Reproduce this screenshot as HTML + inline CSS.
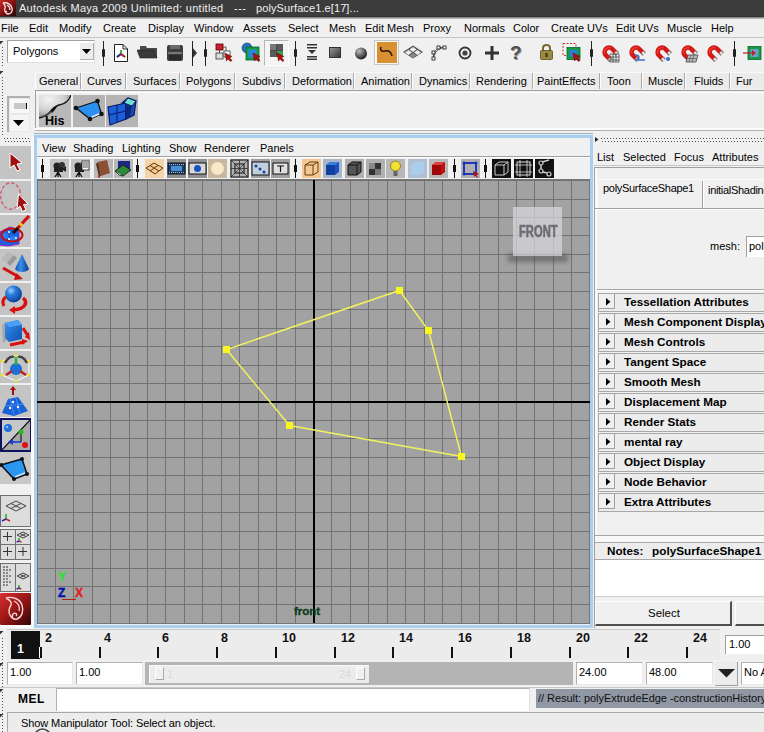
<!DOCTYPE html><html><head><meta charset="utf-8"><style>
html,body{margin:0;padding:0}
body{width:764px;height:732px;position:relative;overflow:hidden;background:#f0f0f0;font-family:"Liberation Sans",sans-serif;font-size:11px;color:#000}
.a{position:absolute}
.t{position:absolute;white-space:nowrap;line-height:13px}
svg{display:block}
</style></head><body><div class="a" style="left:0px;top:0px;width:764px;height:17px;background:#3c3c3c"></div>
<div class="a" style="left:0px;top:16px;width:764px;height:1px;background:#343434"></div>
<div class="a" style="left:0px;top:17px;width:764px;height:1px;background:#8a8a8a"></div>
<div class="a" style="left:0px;top:18px;width:764px;height:1px;background:#b8b8b8"></div>
<svg class="a" style="left:0;top:0" width="16" height="16"><defs><linearGradient id="gtl" x1="0" y1="0" x2="1" y2="1"><stop offset="0" stop-color="#d02828"/><stop offset="0.5" stop-color="#801010"/><stop offset="1" stop-color="#200808"/></linearGradient></defs><rect width="16" height="16" fill="url(#gtl)"/><path d="M3 3C7 2 11 4 12 8C13 11 11 14 8 14C6 14 5 12 7 11M3 3C5 5 6 6 5 8C4 10 5 13 8 14M7 5C9 6 10 8 10 10" fill="none" stroke="#f8e8e8" stroke-width="1.3"/></svg>
<div class="t" style="left:19px;top:2px;color:#f0f0f0;font-size:11px;letter-spacing:0.28px">Autodesk Maya 2009 Unlimited: untitled</div>
<div class="t" style="left:234px;top:2px;color:#f0f0f0;font-size:11px;letter-spacing:0.5px">---</div>
<div class="t" style="left:256px;top:2px;color:#f0f0f0;font-size:11px;letter-spacing:0.1px">polySurface1.e[17]...</div>
<div class="t" style="left:1px;top:22px;">File</div>
<div class="t" style="left:29px;top:22px;">Edit</div>
<div class="t" style="left:59px;top:22px;">Modify</div>
<div class="t" style="left:103px;top:22px;">Create</div>
<div class="t" style="left:148px;top:22px;">Display</div>
<div class="t" style="left:194px;top:22px;">Window</div>
<div class="t" style="left:243px;top:22px;">Assets</div>
<div class="t" style="left:288px;top:22px;">Select</div>
<div class="t" style="left:329px;top:22px;">Mesh</div>
<div class="t" style="left:365px;top:22px;">Edit Mesh</div>
<div class="t" style="left:423px;top:22px;">Proxy</div>
<div class="t" style="left:464px;top:22px;">Normals</div>
<div class="t" style="left:513px;top:22px;">Color</div>
<div class="t" style="left:551px;top:22px;">Create UVs</div>
<div class="t" style="left:616px;top:22px;">Edit UVs</div>
<div class="t" style="left:667px;top:22px;">Muscle</div>
<div class="t" style="left:711px;top:22px;">Help</div>
<div class="a" style="left:0px;top:37px;width:764px;height:1px;background:#c4c4c4"></div>
<div class="a" style="left:2px;top:47px;width:1px;height:21px;background:repeating-linear-gradient(#555 0 1px,transparent 1px 3px)"></div>
<div class="a" style="left:2px;top:77px;width:1px;height:58px;background:repeating-linear-gradient(#555 0 1px,transparent 1px 3px)"></div>
<svg class="a" style="left:0;top:41px" width="4" height="4"><path d="M0 0H3.5L0 3.5Z" fill="#333"/></svg>
<svg class="a" style="left:0;top:71px" width="4" height="4"><path d="M0 0H3.5L0 3.5Z" fill="#333"/></svg>
<div class="a" style="left:7px;top:40px;width:88px;height:23px;background:#fff;border-top:1px solid #a0a0a0;border-left:1px solid #a0a0a0;box-sizing:border-box;border-right:1px solid #e0e0e0;border-bottom:1px solid #e0e0e0"></div>
<div class="a" style="left:80px;top:43px;width:14px;height:17px;background:#ececec;border-right:1px solid #b0b0b0;border-bottom:1px solid #b0b0b0;box-sizing:border-box"></div>
<svg class="a" style="left:82px;top:49px" width="10" height="6"><path d="M0 0H9L4.5 5Z" fill="#000"/></svg>
<div class="t" style="left:13px;top:45px;">Polygons</div>
<div class="a" style="left:103px;top:41px;width:1px;height:25px;background:#222"></div>
<div class="a" style="left:102px;top:49px;width:3px;height:8px;background:#222;border-radius:1px"></div>
<div class="a" style="left:205px;top:41px;width:1px;height:25px;background:#222"></div>
<div class="a" style="left:204px;top:49px;width:3px;height:8px;background:#222;border-radius:1px"></div>
<div class="a" style="left:295px;top:41px;width:1px;height:25px;background:#222"></div>
<div class="a" style="left:294px;top:49px;width:3px;height:8px;background:#222;border-radius:1px"></div>
<div class="a" style="left:591px;top:41px;width:1px;height:25px;background:#222"></div>
<div class="a" style="left:590px;top:49px;width:3px;height:8px;background:#222;border-radius:1px"></div>
<div class="a" style="left:734px;top:41px;width:1px;height:25px;background:#222"></div>
<div class="a" style="left:733px;top:49px;width:3px;height:8px;background:#222;border-radius:1px"></div>
<svg class="a" style="left:192px;top:47px" width="6" height="12"><path d="M0 0L5 6L0 12Z" fill="#333"/></svg>
<div class="a" style="left:192px;top:41px;width:1px;height:25px;background:#222"></div>
<svg class="a" style="left:114px;top:44px;" width="14" height="18" viewBox="0 0 14 18"><path d="M0.5 0.5H9L13.5 5V17.5H0.5Z" fill="#fff" stroke="#222"/><path d="M9 0.5V5H13.5" fill="none" stroke="#222"/><path d="M7 6V10L3 13M7 10L11 13" stroke="#2a8a2a" stroke-width="1.6" fill="none"/><path d="M7 10L3 13" stroke="#1a2aa0" stroke-width="1.8"/><path d="M7 10L11 13" stroke="#c02020" stroke-width="1.8"/></svg>
<svg class="a" style="left:137px;top:46px;" width="21" height="13" viewBox="0 0 21 13"><path d="M3 0H9L10 2H20V12H3Z" fill="#4a4a4a"/><path d="M0 4H17L20 12H3Z" fill="#3a3a3a" stroke="#222" stroke-width="0.6"/></svg>
<svg class="a" style="left:167px;top:45px;" width="16" height="16" viewBox="0 0 16 16"><rect x="0" y="0" width="16" height="16" rx="2" fill="#3c3c3c"/><rect x="3" y="0" width="10" height="4" fill="#6a6a6a"/><rect x="1" y="7" width="14" height="2" fill="#777"/><rect x="2" y="10" width="12" height="5" fill="#2a2a2a"/></svg>
<svg class="a" style="left:215px;top:43px;" width="19" height="20" viewBox="0 0 19 20"><rect x="1" y="1" width="7" height="6" fill="#d02030" stroke="#500" stroke-width="0.8"/><rect x="1" y="10" width="7" height="6" fill="#ddd" stroke="#333" stroke-width="0.8"/><rect x="9" y="8" width="6" height="6" fill="#fff" stroke="#333" stroke-width="0.8"/><path d="M4.5 7V10M8 4H11V8" stroke="#333" fill="none" stroke-width="0.8"/><path d="M10 10L17 13.5L14.5 14.5L17 17.5L15.5 18.5L13 16L11.5 18Z" fill="#b01010" stroke="#600" stroke-width="0.5"/></svg>
<svg class="a" style="left:241px;top:42px;" width="20" height="21" viewBox="0 0 20 21"><circle cx="6" cy="6" r="5" fill="#2a70c8" stroke="#135" stroke-width="0.6"/><rect x="5" y="5" width="13" height="13" fill="#1a9a40" stroke="#063" stroke-width="0.8"/><rect x="7.5" y="7.5" width="8" height="8" fill="#2a88e0"/><path d="M12 11L19 14.5L16.5 15.5L19 18.5L17.5 19.5L15 17L13.5 19Z" fill="#b01010" stroke="#600" stroke-width="0.5"/></svg>
<div class="a" style="left:264px;top:40px;width:25px;height:26px;border:1px solid #b8b8b8;border-right-color:#fff;border-bottom-color:#fff;box-sizing:border-box;background:#f4f4f4"></div>
<svg class="a" style="left:269px;top:43px;" width="18" height="20" viewBox="0 0 18 20"><rect x="1" y="1" width="13" height="13" fill="#5a5a5a"/><rect x="1" y="1" width="6" height="6" fill="#7a7a7a"/><rect x="8" y="8" width="6" height="6" fill="#3aa050"/><path d="M7.5 1V14M1 7.5H14" stroke="#444" stroke-width="0.8"/><path d="M8 10L15 13.5L12.5 14.5L15 17.5L13.5 18.5L11 16L9.5 18Z" fill="#b01010" stroke="#600" stroke-width="0.5"/></svg>
<svg class="a" style="left:307px;top:44px;" width="10" height="16" viewBox="0 0 10 16"><rect x="0" y="0" width="10" height="1.5" fill="#333"/><rect x="0" y="3" width="10" height="1.5" fill="#333"/><path d="M1 6H9L5 10Z" fill="#333"/><rect x="0" y="12" width="10" height="1.5" fill="#333"/><rect x="0" y="14.5" width="10" height="1.5" fill="#333"/></svg>
<svg class="a" style="left:329px;top:47px;" width="12" height="11" viewBox="0 0 12 11"><defs><linearGradient id="gsq" x1="0" y1="0" x2="1" y2="1"><stop offset="0" stop-color="#999"/><stop offset="1" stop-color="#333"/></linearGradient></defs><rect x="0.5" y="0.5" width="11" height="10" fill="url(#gsq)" stroke="#333"/></svg>
<svg class="a" style="left:354px;top:47px;" width="14" height="13" viewBox="0 0 14 13"><defs><radialGradient id="gsp" cx="0.35" cy="0.3" r="0.7"><stop offset="0" stop-color="#bbb"/><stop offset="1" stop-color="#222"/></radialGradient></defs><circle cx="7" cy="6.5" r="6" fill="url(#gsp)"/></svg>
<div class="a" style="left:374px;top:40px;width:25px;height:25px;border:1px solid #c8c8c8;box-sizing:border-box;background:#fafafa"></div>
<div class="a" style="left:377px;top:42px;width:20px;height:21px;background:#d89030"></div>
<svg class="a" style="left:377px;top:42px;" width="20" height="21" viewBox="0 0 20 21"><path d="M4 5C3 8 4 10 8 9C12 8 14 10 15 14" stroke="#2a1a0a" stroke-width="1.6" fill="none"/></svg>
<svg class="a" style="left:402px;top:45px;" width="22" height="15" viewBox="0 0 22 15"><path d="M11 0.5L21 7L11 13.5L1 7Z" fill="#555"/><path d="M11 2L14.5 4.5L11 7L7.5 4.5Z M15.5 5L19 7.5L15.5 10L12 7.5Z M6.5 5L10 7.5L6.5 10L3 7.5Z" fill="#eee"/><path d="M11 8L14.5 10.5L11 13L7.5 10.5Z" fill="#888"/></svg>
<svg class="a" style="left:431px;top:45px;" width="16" height="16" viewBox="0 0 16 16"><path d="M2.5 13.5V7.5L7.5 2.5H13.5" stroke="#333" fill="none" stroke-width="0.8"/><path d="M2.5 13.5C3 7 8 3 13.5 2.5" stroke="#333" fill="none" stroke-width="0.8"/><rect x="1" y="12" width="3" height="3" fill="#fff" stroke="#111" stroke-width="0.8"/><rect x="1" y="6" width="3" height="3" fill="#fff" stroke="#111" stroke-width="0.8"/><rect x="6" y="1" width="3" height="3" fill="#fff" stroke="#111" stroke-width="0.8"/><rect x="12" y="1" width="3" height="3" fill="#fff" stroke="#111" stroke-width="0.8"/></svg>
<svg class="a" style="left:458px;top:46px;" width="14" height="14" viewBox="0 0 14 14"><circle cx="7" cy="7" r="5.5" fill="none" stroke="#333" stroke-width="1.8"/><circle cx="7" cy="7" r="2.6" fill="#444"/></svg>
<svg class="a" style="left:485px;top:46px;" width="14" height="14" viewBox="0 0 14 14"><rect x="5.5" y="0" width="3" height="14" fill="#333"/><rect x="0" y="5.5" width="14" height="3" fill="#333"/></svg>
<div class="t" style="left:510px;top:46px;font-size:19px;font-weight:bold;color:#505050;text-shadow:1px 1px 0 #999">?</div>
<svg class="a" style="left:540px;top:43px;" width="13" height="17" viewBox="0 0 13 17"><path d="M3 8V5C3 1 10 1 10 5V8" stroke="#7a6a30" stroke-width="2" fill="none"/><rect x="0.5" y="7.5" width="12" height="9" rx="1" fill="#9a8a40" stroke="#5a4a20" stroke-width="0.8"/><rect x="5.5" y="10" width="2" height="4" fill="#3a2a10"/></svg>
<svg class="a" style="left:562px;top:43px;" width="20" height="21" viewBox="0 0 20 21"><rect x="1" y="0.5" width="13" height="12" fill="none" stroke="#d03030" stroke-dasharray="2 1.5"/><rect x="5" y="4.5" width="13" height="12" fill="#1a9a40" stroke="#063" stroke-width="0.8"/><rect x="7.5" y="7" width="8" height="7" fill="#2a80d0"/><path d="M11 10L18 13.5L15.5 14.5L18 17.5L16.5 18.5L14 16L12.5 18Z" fill="#b01010" stroke="#600" stroke-width="0.5"/></svg>
<svg class="a" style="left:600px;top:43px;" width="21" height="20" viewBox="0 0 21 20"><path d="M17.1 10.8L12.18 5.82A4.5 4.5 0 0 0 5.82 12.18L10.8 17.1" fill="none" stroke="#d41818" stroke-width="4.6"/><path d="M10.5 4.8A4.5 4.5 0 0 0 4.8 10.5" fill="none" stroke="#f05030" stroke-width="1.5" opacity="0.7"/><path d="M17.3 11L15.3 9M11 17.3L9 15.3" stroke="#8a8a8a" stroke-width="4.6"/><path d="M17.3 11L15.3 9M11 17.3L9 15.3" stroke="#e8e8e8" stroke-width="2"/><path d="M10 11H19V19H10Z M13 11V19 M16 11V19 M10 14H19 M10 17H19" stroke="#444" fill="none" stroke-width="0.8"/></svg>
<svg class="a" style="left:627px;top:43px;" width="21" height="20" viewBox="0 0 21 20"><path d="M17.1 10.8L12.18 5.82A4.5 4.5 0 0 0 5.82 12.18L10.8 17.1" fill="none" stroke="#d41818" stroke-width="4.6"/><path d="M10.5 4.8A4.5 4.5 0 0 0 4.8 10.5" fill="none" stroke="#f05030" stroke-width="1.5" opacity="0.7"/><path d="M17.3 11L15.3 9M11 17.3L9 15.3" stroke="#8a8a8a" stroke-width="4.6"/><path d="M17.3 11L15.3 9M11 17.3L9 15.3" stroke="#e8e8e8" stroke-width="2"/><path d="M8 12C13 12 13 15 9 17H18" stroke="#3a70c0" stroke-width="1.6" fill="none"/></svg>
<svg class="a" style="left:653px;top:43px;" width="21" height="20" viewBox="0 0 21 20"><path d="M17.1 10.8L12.18 5.82A4.5 4.5 0 0 0 5.82 12.18L10.8 17.1" fill="none" stroke="#d41818" stroke-width="4.6"/><path d="M10.5 4.8A4.5 4.5 0 0 0 4.8 10.5" fill="none" stroke="#f05030" stroke-width="1.5" opacity="0.7"/><path d="M17.3 11L15.3 9M11 17.3L9 15.3" stroke="#8a8a8a" stroke-width="4.6"/><path d="M17.3 11L15.3 9M11 17.3L9 15.3" stroke="#e8e8e8" stroke-width="2"/><circle cx="15" cy="16" r="2" fill="#2a70d0"/></svg>
<svg class="a" style="left:679px;top:43px;" width="21" height="20" viewBox="0 0 21 20"><path d="M17.1 10.8L12.18 5.82A4.5 4.5 0 0 0 5.82 12.18L10.8 17.1" fill="none" stroke="#d41818" stroke-width="4.6"/><path d="M10.5 4.8A4.5 4.5 0 0 0 4.8 10.5" fill="none" stroke="#f05030" stroke-width="1.5" opacity="0.7"/><path d="M17.3 11L15.3 9M11 17.3L9 15.3" stroke="#8a8a8a" stroke-width="4.6"/><path d="M17.3 11L15.3 9M11 17.3L9 15.3" stroke="#e8e8e8" stroke-width="2"/><path d="M9 12L19 12L17 19L7 19Z" fill="#bbb" stroke="#444" stroke-width="0.8"/><path d="M12 12L10 19M15 12L13 19M8 15.5H18" stroke="#444" stroke-width="0.6"/></svg>
<svg class="a" style="left:705px;top:43px;" width="21" height="20" viewBox="0 0 21 20"><path d="M17.1 10.8L12.18 5.82A4.5 4.5 0 0 0 5.82 12.18L10.8 17.1" fill="none" stroke="#d41818" stroke-width="4.6"/><path d="M10.5 4.8A4.5 4.5 0 0 0 4.8 10.5" fill="none" stroke="#f05030" stroke-width="1.5" opacity="0.7"/><path d="M17.3 11L15.3 9M11 17.3L9 15.3" stroke="#8a8a8a" stroke-width="4.6"/><path d="M17.3 11L15.3 9M11 17.3L9 15.3" stroke="#e8e8e8" stroke-width="2"/></svg>
<svg class="a" style="left:743px;top:46px;" width="19" height="15" viewBox="0 0 19 15"><rect x="5" y="0.5" width="13" height="13" fill="#1a9a40" stroke="#063" stroke-width="0.8"/><rect x="7.5" y="3" width="8" height="8" fill="#6aa0d0"/><path d="M0 7H10" stroke="#c02020" stroke-width="1.2"/><path d="M9 4L13 7L9 10Z" fill="#c02020"/></svg>
<div class="a" style="left:35px;top:72px;width:729px;height:17px;background:#ebebeb;border-top:1px solid #f8f8f8;box-sizing:border-box"></div>
<div class="a" style="left:80px;top:73px;width:1px;height:16px;background:#a8a8a8"></div>
<div class="a" style="left:81px;top:73px;width:1px;height:16px;background:#fff"></div>
<div class="a" style="left:125px;top:73px;width:1px;height:16px;background:#a8a8a8"></div>
<div class="a" style="left:126px;top:73px;width:1px;height:16px;background:#fff"></div>
<div class="a" style="left:179px;top:73px;width:1px;height:16px;background:#a8a8a8"></div>
<div class="a" style="left:180px;top:73px;width:1px;height:16px;background:#fff"></div>
<div class="a" style="left:234px;top:73px;width:1px;height:16px;background:#a8a8a8"></div>
<div class="a" style="left:235px;top:73px;width:1px;height:16px;background:#fff"></div>
<div class="a" style="left:284px;top:73px;width:1px;height:16px;background:#a8a8a8"></div>
<div class="a" style="left:285px;top:73px;width:1px;height:16px;background:#fff"></div>
<div class="a" style="left:353px;top:73px;width:1px;height:16px;background:#a8a8a8"></div>
<div class="a" style="left:354px;top:73px;width:1px;height:16px;background:#fff"></div>
<div class="a" style="left:411px;top:73px;width:1px;height:16px;background:#a8a8a8"></div>
<div class="a" style="left:412px;top:73px;width:1px;height:16px;background:#fff"></div>
<div class="a" style="left:469px;top:73px;width:1px;height:16px;background:#a8a8a8"></div>
<div class="a" style="left:470px;top:73px;width:1px;height:16px;background:#fff"></div>
<div class="a" style="left:532px;top:73px;width:1px;height:16px;background:#a8a8a8"></div>
<div class="a" style="left:533px;top:73px;width:1px;height:16px;background:#fff"></div>
<div class="a" style="left:599px;top:73px;width:1px;height:16px;background:#a8a8a8"></div>
<div class="a" style="left:600px;top:73px;width:1px;height:16px;background:#fff"></div>
<div class="a" style="left:641px;top:73px;width:1px;height:16px;background:#a8a8a8"></div>
<div class="a" style="left:642px;top:73px;width:1px;height:16px;background:#fff"></div>
<div class="a" style="left:684px;top:73px;width:1px;height:16px;background:#a8a8a8"></div>
<div class="a" style="left:685px;top:73px;width:1px;height:16px;background:#fff"></div>
<div class="a" style="left:729px;top:73px;width:1px;height:16px;background:#a8a8a8"></div>
<div class="a" style="left:730px;top:73px;width:1px;height:16px;background:#fff"></div>
<div class="a" style="left:35px;top:72px;width:1px;height:17px;background:#fff"></div>
<div class="t" style="left:39px;top:75px;">General</div>
<div class="t" style="left:87px;top:75px;">Curves</div>
<div class="t" style="left:133px;top:75px;">Surfaces</div>
<div class="t" style="left:186px;top:75px;">Polygons</div>
<div class="t" style="left:242px;top:75px;">Subdivs</div>
<div class="t" style="left:292px;top:75px;">Deformation</div>
<div class="t" style="left:361px;top:75px;">Animation</div>
<div class="t" style="left:419px;top:75px;">Dynamics</div>
<div class="t" style="left:476px;top:75px;">Rendering</div>
<div class="t" style="left:537px;top:75px;">PaintEffects</div>
<div class="t" style="left:607px;top:75px;">Toon</div>
<div class="t" style="left:648px;top:75px;">Muscle</div>
<div class="t" style="left:694px;top:75px;">Fluids</div>
<div class="t" style="left:736px;top:75px;">Fur</div>
<div class="a" style="left:35px;top:90px;width:729px;height:1px;background:#a0a0a0"></div>
<div class="a" style="left:35px;top:91px;width:729px;height:40px;background:#f0f0f0;border-left:1px solid #a0a0a0;box-sizing:border-box"></div>
<div class="a" style="left:36px;top:92px;width:728px;height:1px;background:#fff"></div>
<div class="a" style="left:38px;top:94px;width:726px;height:34px;background:#f0f0f0"></div>
<svg class="a" style="left:39px;top:95px;" width="32" height="32" viewBox="0 0 32 32"><defs><radialGradient id="ghis" cx="0.3" cy="0.2" r="0.8"><stop offset="0" stop-color="#f4f4f4"/><stop offset="0.6" stop-color="#d0d0d0"/><stop offset="1" stop-color="#909090"/></radialGradient></defs><rect width="32" height="32" fill="#b8b8b8"/><path d="M0 0H32C30 6 26 9 20 10C16 11 14 13 11 17C8 21 4 22 0 23Z" fill="url(#ghis)"/><path d="M0 23C4 22 8 21 11 17C14 13 16 11 20 10C26 9 30 6 32 0" stroke="#111" stroke-width="1.3" fill="none"/><path d="M12 16C14 13 16 11 19 10.5C17 13 16 15 13 18Z" fill="#111"/><path d="M3 22C8 20 10 18 13 17" stroke="#555" stroke-width="2" fill="none" opacity="0.6"/></svg>
<div class="t" style="left:45px;top:115px;font-weight:bold;font-size:12.5px;color:#000">His</div>
<svg class="a" style="left:73px;top:95px;" width="32" height="32" viewBox="0 0 32 32"><rect width="32" height="32" fill="#b4b4b4"/><path d="M3 13L24.5 6L28.5 19L17 24Z" fill="#2a90f0" stroke="#111" stroke-width="1.3"/><path d="M18 22.5L27 18.5" stroke="#e0f0ff" stroke-width="1.5"/><circle cx="3" cy="13" r="2.3" fill="#111"/><circle cx="24.5" cy="6" r="2.3" fill="#111"/><circle cx="28.5" cy="19" r="2.3" fill="#111"/><circle cx="17" cy="24" r="2.3" fill="#111"/></svg>
<svg class="a" style="left:106px;top:95px;" width="32" height="32" viewBox="0 0 32 32"><rect width="32" height="32" fill="#b4b4b4"/><path d="M2 12L20 8L20 24L4 30Z" fill="#1a60d8" stroke="#0a1a6a" stroke-width="1.2"/><path d="M11 10V27M3 20L20 16" stroke="#0a1a6a" stroke-width="1"/><path d="M16 8L22 3L30 6L28 20L20 24L20 8Z" fill="#1a4ab0" stroke="#0a1a6a" stroke-width="1.2"/><path d="M22 3L30 6L26 11L18 8Z" fill="#70e0d0" stroke="#0a1a6a" stroke-width="1"/><path d="M20 10L26 11L24 22L20 24Z" fill="#0a2a80"/></svg>
<div class="a" style="left:7px;top:96px;width:23px;height:36px;background:#e8e8e8;border-left:2px solid #b0b0b0;border-top:2px solid #b0b0b0;box-sizing:border-box"></div>
<div class="a" style="left:10px;top:99px;width:19px;height:14px;background:#f8f8f8"></div>
<div class="a" style="left:14px;top:103px;width:12px;height:6px;background:#c8c8c8"></div>
<div class="a" style="left:26px;top:103px;width:1px;height:6px;background:#000"></div>
<div class="a" style="left:10px;top:115px;width:19px;height:16px;background:#f4f4f4"></div>
<svg class="a" style="left:13px;top:120px;" width="12" height="7" viewBox="0 0 12 7"><path d="M0 0H11L5.5 6Z" fill="#000"/></svg>
<div class="a" style="left:0px;top:137px;width:34px;height:491px;background:#f0f0f0"></div>
<div class="a" style="left:4px;top:138px;width:28px;height:1px;background:repeating-linear-gradient(90deg,#444 0 1px,transparent 1px 3px)"></div>
<div class="a" style="left:5px;top:141px;width:28px;height:1px;background:repeating-linear-gradient(90deg,#444 0 1px,transparent 1px 3px)"></div>
<div class="a" style="left:0px;top:146px;width:31px;height:33px;background:#c4c4c4"></div>
<div class="a" style="left:0px;top:181px;width:31px;height:32px;background:#c4c4c4"></div>
<div class="a" style="left:0px;top:215px;width:31px;height:32px;background:#c4c4c4"></div>
<div class="a" style="left:0px;top:249px;width:31px;height:32px;background:#c4c4c4"></div>
<div class="a" style="left:0px;top:283px;width:31px;height:32px;background:#c4c4c4"></div>
<div class="a" style="left:0px;top:317px;width:31px;height:32px;background:#c4c4c4"></div>
<div class="a" style="left:0px;top:351px;width:31px;height:32px;background:#c4c4c4"></div>
<div class="a" style="left:0px;top:385px;width:31px;height:32px;background:#c4c4c4"></div>
<svg class="a" style="left:0px;top:146px;" width="31" height="32" viewBox="0 0 31 32"><path d="M10 7L22 17L17 18L20 24L17 25L14 19L10 22Z" fill="#a01010" stroke="#fff" stroke-width="1"/></svg>
<svg class="a" style="left:0px;top:181px;" width="31" height="32" viewBox="0 0 31 32"><ellipse cx="10.7" cy="15" rx="10" ry="13.2" fill="none" stroke="#d06070" stroke-width="1.4" stroke-dasharray="3.5 2"/><path d="M18.5 13L28 23L23.5 23.5L26 29L22.5 30.5L20 25L17 28Z" fill="#a01010" stroke="#fff" stroke-width="1"/></svg>
<svg class="a" style="left:0px;top:215px;" width="31" height="32" viewBox="0 0 31 32"><path d="M0 17L10 12L19 15L19 29L8 31L0 30Z" fill="#1a60e0" stroke="#9020c0" stroke-width="1"/><circle cx="5" cy="21" r="3" fill="#2a80f0"/><circle cx="13" cy="24" r="3" fill="#2a80f0"/><ellipse cx="12" cy="20" rx="10.5" ry="6.5" fill="none" stroke="#c01010" stroke-width="2"/><path d="M16 15L29 1" stroke="#d01010" stroke-width="3.2"/><path d="M20 10.5L22 8.5" stroke="#f0d020" stroke-width="3.4"/><path d="M13 18L18 13" stroke="#111" stroke-width="3"/><circle cx="9" cy="17" r="1" fill="#fff"/><circle cx="16" cy="23" r="1" fill="#fff"/><circle cx="9" cy="24" r="1" fill="#fff"/></svg>
<svg class="a" style="left:0px;top:249px;" width="31" height="32" viewBox="0 0 31 32"><defs><linearGradient id="gcn" x1="0" y1="0" x2="1" y2="0"><stop offset="0" stop-color="#0a50b0"/><stop offset="0.4" stop-color="#3a90e8"/><stop offset="1" stop-color="#0a3a90"/></linearGradient></defs><path d="M1 10L8 3L14 6L7 14Z" fill="#b8b8b8"/><path d="M7 14L14 6L17 9L10 17Z" fill="#989898"/><path d="M22 5L29 20C27 24 17 24 15 20Z" fill="url(#gcn)"/><path d="M3 19L19 28" stroke="#d01010" stroke-width="3"/><path d="M16 24L23 30L14 31Z" fill="#d01010"/></svg>
<svg class="a" style="left:0px;top:283px;" width="31" height="32" viewBox="0 0 31 32"><defs><radialGradient id="gsb" cx="0.35" cy="0.3" r="0.75"><stop offset="0" stop-color="#a0d0ff"/><stop offset="0.35" stop-color="#2a80e0"/><stop offset="1" stop-color="#0a3a90"/></radialGradient></defs><circle cx="13.5" cy="11" r="8.5" fill="url(#gsb)"/><path d="M4 23C2 19 3 16 6 14" stroke="#d81010" stroke-width="3" fill="none"/><path d="M23 15C28 19 26 26 13 27" stroke="#d81010" stroke-width="3.5" fill="none"/><path d="M15 23L9 27L15 31Z" fill="#d81010"/></svg>
<svg class="a" style="left:0px;top:317px;" width="31" height="32" viewBox="0 0 31 32"><defs><linearGradient id="gcb" x1="0" y1="0" x2="1" y2="1"><stop offset="0" stop-color="#3a90f0"/><stop offset="1" stop-color="#0a50b0"/></linearGradient></defs><path d="M2 8L6 5L6 24L3 26Z" fill="#a8a8a8"/><path d="M5 6L18 3L22 8L22 22L9 25L5 21Z" fill="url(#gcb)"/><path d="M5 6L18 3L22 8L9 10Z" fill="#4aa0f8"/><path d="M23 11L28 19" stroke="#d81010" stroke-width="3"/><path d="M25 20L29 15L30 23Z" fill="#d81010"/><path d="M10 28L24 25" stroke="#d81010" stroke-width="3"/><path d="M22 22L28 24L22 28Z" fill="#d81010"/></svg>
<svg class="a" style="left:0px;top:351px;" width="31" height="32" viewBox="0 0 31 32"><path d="M2 10L16 4L29 10V24L16 30L2 24Z" fill="none" stroke="#fff" stroke-width="1"/><circle cx="16" cy="18" r="6" fill="#1a70d8"/><path d="M16 6V14" stroke="#2ab040" stroke-width="2.5"/><path d="M5 12C8 6 12 5 14 6M27 12C24 6 20 5 18 6" stroke="#444" stroke-width="2.5" fill="none"/><path d="M6 24L12 20M26 24L20 20" stroke="#c02020" stroke-width="2.5"/><circle cx="2" cy="10" r="1.5" fill="#f0e020"/><circle cx="29" cy="10" r="1.5" fill="#f0e020"/><circle cx="2" cy="24" r="1.5" fill="#f0e020"/><circle cx="29" cy="24" r="1.5" fill="#f0e020"/><circle cx="16" cy="30" r="1.5" fill="#f0e020"/><circle cx="16" cy="4" r="1.5" fill="#f0e020"/></svg>
<svg class="a" style="left:0px;top:385px;" width="31" height="32" viewBox="0 0 31 32"><path d="M13 3V10" stroke="#a01010" stroke-width="2"/><path d="M10 5L13 1L16 5Z" fill="#a01010"/><path d="M2 28L8 14L18 12L28 26L14 31Z" fill="#1a60d8"/><path d="M5 21L24 19M10 14L14 30M16 13L20 28" stroke="#4a9af0" stroke-width="0.8"/><circle cx="13" cy="17" r="1.2" fill="#fff"/><circle cx="10" cy="23" r="1.2" fill="#fff"/><circle cx="18" cy="22" r="1.2" fill="#fff"/></svg>
<div class="a" style="left:0px;top:418px;width:32px;height:34px;background:#b8b8b8;border:2px solid #101060;box-sizing:border-box"></div>
<svg class="a" style="left:2px;top:420px;" width="28" height="30" viewBox="0 0 28 30"><path d="M0 0H28V0L0 30Z" fill="#c8c8c8"/><path d="M28 0L0 30H28Z" fill="#a8a8a8"/><path d="M28 0L0 30" stroke="#111" stroke-width="1.2"/><circle cx="6" cy="8" r="4" fill="#1a70d8"/><circle cx="5" cy="7" r="1.3" fill="#8ac0f0"/><path d="M19 22V12" stroke="#1a1a1a" stroke-width="1.2"/><circle cx="19" cy="12" r="2.5" fill="#20c020"/><path d="M19 22H9" stroke="#1a3ad0" stroke-width="1.6"/><path d="M11 19L6 22L11 25Z" fill="#1a3ad0"/><circle cx="23" cy="25" r="3" fill="#e01010"/></svg>
<div class="a" style="left:0px;top:452px;width:31px;height:32px;background:#c8c8c8"></div>
<svg class="a" style="left:0px;top:452px;" width="31" height="32" viewBox="0 0 31 32"><path d="M1 13L22 7L27 22L14 27Z" fill="#2a98f0" stroke="#111" stroke-width="1.5"/><path d="M15 25L25 21" stroke="#d0e8ff" stroke-width="1.5"/><circle cx="1.5" cy="13" r="2" fill="#111"/><circle cx="22" cy="7" r="2" fill="#111"/><circle cx="27" cy="22" r="2" fill="#111"/><circle cx="14" cy="27" r="2" fill="#111"/></svg>
<div class="a" style="left:0px;top:495px;width:31px;height:32px;background:#dcdcdc;border:1px solid #707070;box-sizing:border-box"></div>
<svg class="a" style="left:0px;top:495px;" width="31" height="32" viewBox="0 0 31 32"><path d="M16 6L26 11L16 16L6 11Z M11 8.5L21 13.5 M21 8.5L11 13.5" fill="none" stroke="#444" stroke-width="1"/><path d="M6 24V19" stroke="#20b020" stroke-width="1.5"/><path d="M6 24L2 26" stroke="#2020d0" stroke-width="1.5"/><path d="M6 24L10 26" stroke="#d02020" stroke-width="1.5"/></svg>
<div class="a" style="left:0px;top:529px;width:31px;height:31px;background:#dcdcdc;border:1px solid #707070;box-sizing:border-box"></div>
<div class="a" style="left:15px;top:529px;width:1px;height:31px;background:#707070"></div>
<div class="a" style="left:0px;top:544px;width:31px;height:1px;background:#707070"></div>
<svg class="a" style="left:0px;top:529px;" width="31" height="31" viewBox="0 0 31 31"><path d="M7.5 3V12M3 7.5H12M7.5 18V27M3 22.5H12M23 18V27M18 22.5H27" stroke="#333" stroke-width="1"/><path d="M23 3L29 6L23 9L17 6Z M20 4.5L26 7.5 M26 4.5L20 7.5" fill="none" stroke="#444" stroke-width="1"/><path d="M19 12V9.0" stroke="#20b020" stroke-width="1.5"/><path d="M19 12L16.6 13.2" stroke="#2020d0" stroke-width="1.5"/><path d="M19 12L21.4 13.2" stroke="#d02020" stroke-width="1.5"/></svg>
<div class="a" style="left:0px;top:563px;width:31px;height:29px;background:#dcdcdc;border:1px solid #707070;box-sizing:border-box"></div>
<div class="a" style="left:15px;top:563px;width:1px;height:29px;background:#707070"></div>
<svg class="a" style="left:0px;top:563px;" width="31" height="29" viewBox="0 0 31 29"><path d="M3 4H9M3 7H11M3 10H9M3 13H11M3 16H9M3 19H11M3 22H9" stroke="#333" stroke-width="1" stroke-dasharray="2 1"/><path d="M23 10L29 13L23 16L17 13Z M20 11.5L26 14.5 M26 11.5L20 14.5" fill="none" stroke="#444" stroke-width="1"/><path d="M19 25V22.0" stroke="#20b020" stroke-width="1.5"/><path d="M19 25L16.6 26.2" stroke="#2020d0" stroke-width="1.5"/><path d="M19 25L21.4 26.2" stroke="#d02020" stroke-width="1.5"/></svg>
<svg class="a" style="left:0px;top:593px;" width="31" height="32" viewBox="0 0 31 32"><defs><linearGradient id="gml" x1="0" y1="0" x2="1" y2="1"><stop offset="0" stop-color="#d83030"/><stop offset="0.45" stop-color="#a01818"/><stop offset="1" stop-color="#300404"/></linearGradient></defs><rect width="31" height="32" rx="1" fill="url(#gml)"/><path d="M6 5C12 3 20 6 22 12C24 18 22 24 17 26C13 27 11 24 13 21C15 19 18 21 16 23M6 5C10 7 12 9 11 12C9 15 8 18 10 22C11 25 14 27 17 26" fill="none" stroke="#f4d8d8" stroke-width="1.4"/><path d="M14 8C18 10 20 14 19 18" fill="none" stroke="#f4d8d8" stroke-width="1.2"/></svg>
<div class="a" style="left:0px;top:625px;width:31px;height:3px;background:#fafafa"></div>
<div class="a" style="left:31px;top:137px;width:3px;height:491px;background:#fafafa"></div>
<div class="a" style="left:35px;top:128px;width:729px;height:2px;background:#fcfcfc"></div>
<div class="a" style="left:35px;top:130px;width:729px;height:1px;background:#b0b0b0"></div>
<div class="a" style="left:34px;top:133px;width:560px;height:1px;background:#a8b0b8"></div>
<div class="a" style="left:34px;top:134px;width:560px;height:494px;background:#aacfee"></div>
<div class="a" style="left:34px;top:134px;width:560px;height:1px;background:#d4ecfc"></div>
<div class="a" style="left:37px;top:138px;width:553px;height:487px;background:#f0f0f0"></div>
<div class="t" style="left:42px;top:142px;">View</div>
<div class="t" style="left:73px;top:142px;">Shading</div>
<div class="t" style="left:122px;top:142px;">Lighting</div>
<div class="t" style="left:169px;top:142px;">Show</div>
<div class="t" style="left:204px;top:142px;">Renderer</div>
<div class="t" style="left:260px;top:142px;">Panels</div>
<div class="a" style="left:37px;top:156px;width:553px;height:1px;background:#a0a0a0"></div>
<div class="a" style="left:37px;top:157px;width:553px;height:1px;background:#fff"></div>
<div class="a" style="left:42px;top:159px;width:1px;height:19px;background:#111"></div>
<div class="a" style="left:41px;top:165px;width:3px;height:7px;background:#111"></div>
<div class="a" style="left:137px;top:159px;width:1px;height:19px;background:#111"></div>
<div class="a" style="left:136px;top:165px;width:3px;height:7px;background:#111"></div>
<div class="a" style="left:295px;top:159px;width:1px;height:19px;background:#111"></div>
<div class="a" style="left:294px;top:165px;width:3px;height:7px;background:#111"></div>
<div class="a" style="left:454px;top:159px;width:1px;height:19px;background:#111"></div>
<div class="a" style="left:453px;top:165px;width:3px;height:7px;background:#111"></div>
<div class="a" style="left:485px;top:159px;width:1px;height:19px;background:#111"></div>
<div class="a" style="left:484px;top:165px;width:3px;height:7px;background:#111"></div>
<svg class="a" style="left:50px;top:159px;" width="19" height="19" viewBox="0 0 19 19"><rect width="19" height="19" fill="#c4c4c4"/><circle cx="7" cy="7" r="3.5" fill="#222"/><circle cx="12" cy="6" r="3" fill="#333"/><rect x="4" y="8" width="9" height="5" fill="#222"/><path d="M13 9L16 7V13L13 11Z" fill="#222"/><path d="M8 13L5 18M8 13V18M8 13L11 18" stroke="#111" stroke-width="1.3"/></svg>
<svg class="a" style="left:71px;top:159px;" width="19" height="19" viewBox="0 0 19 19"><rect width="19" height="19" fill="#c4c4c4"/><circle cx="7" cy="7" r="3.5" fill="#222"/><circle cx="12" cy="6" r="3" fill="#333"/><rect x="4" y="8" width="9" height="5" fill="#222"/><path d="M8 13L5 18M8 13V18M8 13L11 18" stroke="#111" stroke-width="1.3"/><rect x="11" y="2" width="7" height="9" fill="#fff" stroke="#222" stroke-width="0.8"/><path d="M12 4H17M12 6H17M12 8H17" stroke="#222" stroke-width="0.8"/></svg>
<svg class="a" style="left:94px;top:159px;" width="19" height="19" viewBox="0 0 19 19"><rect width="19" height="19" fill="#b8b8b8"/><path d="M4 3L13 1L16 14L7 17Z" fill="#8a5030"/><path d="M4 3L7 17L5 18L2 5Z" fill="#5a3020"/><path d="M5 16V19" stroke="#d02020" stroke-width="1.5"/></svg>
<svg class="a" style="left:114px;top:159px;" width="19" height="19" viewBox="0 0 19 19"><rect width="19" height="19" fill="#b8b8b8"/><rect x="4" y="2" width="12" height="9" fill="#1a2a80"/><path d="M1 12L9 6L17 11L9 17Z" fill="#2a8a3a" stroke="#111" stroke-width="0.8"/><path d="M1 12L5 16L9 17" fill="#fff" stroke="#111" stroke-width="0.8"/></svg>
<svg class="a" style="left:145px;top:159px;" width="19" height="19" viewBox="0 0 19 19"><rect width="19" height="19" fill="#f4d4a8"/><path d="M1 9L9 4L18 9L10 15Z" fill="#f4c890" stroke="#6a3a10" stroke-width="1"/><path d="M5 6.5L14 12M13 6.5L5 12" stroke="#6a3a10" stroke-width="1"/></svg>
<svg class="a" style="left:167px;top:159px;" width="19" height="19" viewBox="0 0 19 19"><rect width="19" height="19" fill="#909090"/><rect x="1" y="4" width="17" height="11" fill="#1a3a6a" stroke="#111"/><rect x="4" y="7" width="11" height="5" fill="#4a90d0"/><path d="M2 5.5H17M2 13.5H17" stroke="#ddd" stroke-width="0.8" stroke-dasharray="1 1"/></svg>
<svg class="a" style="left:188px;top:159px;" width="19" height="19" viewBox="0 0 19 19"><rect width="19" height="19" fill="#909090"/><rect x="1" y="4" width="17" height="11" fill="#d8d8d8" stroke="#111"/><circle cx="9.5" cy="9.5" r="3.5" fill="#1a50c0"/></svg>
<svg class="a" style="left:208px;top:159px;" width="19" height="19" viewBox="0 0 19 19"><rect width="19" height="19" fill="#c8b8a0"/><circle cx="9.5" cy="9.5" r="6.5" fill="#f8e8c8"/></svg>
<svg class="a" style="left:230px;top:159px;" width="19" height="19" viewBox="0 0 19 19"><rect width="19" height="19" fill="#b0b0b0"/><rect x="1" y="1" width="17" height="17" fill="none" stroke="#111"/><rect x="5" y="5" width="9" height="9" fill="none" stroke="#111"/><path d="M1 1L18 18M18 1L1 18M9.5 1V18M1 9.5H18" stroke="#222" stroke-width="0.7"/></svg>
<svg class="a" style="left:251px;top:159px;" width="19" height="19" viewBox="0 0 19 19"><rect width="19" height="19" fill="#a0a0a0"/><rect x="1" y="3" width="17" height="13" fill="#c0d0e0" stroke="#111"/><circle cx="5" cy="7" r="1.5" fill="#1a40a0"/><circle cx="9" cy="10" r="1.5" fill="#1a40a0"/><circle cx="13" cy="13" r="1.5" fill="#1a40a0"/></svg>
<svg class="a" style="left:271px;top:159px;" width="19" height="19" viewBox="0 0 19 19"><rect width="19" height="19" fill="#a0a0a0"/><rect x="2" y="4" width="15" height="11" fill="#e0e0e0" stroke="#111"/><path d="M6 7H13M9.5 7V13" stroke="#111" stroke-width="1.2"/></svg>
<svg class="a" style="left:302px;top:159px;" width="19" height="19" viewBox="0 0 19 19"><rect width="19" height="19" fill="#f4c890"/><path d="M3 6L8 3H16V13L11 16H3Z" fill="none" stroke="#6a3a10" stroke-width="1"/><path d="M3 6H11V16M11 6L16 3" stroke="#6a3a10" stroke-width="1" fill="none"/></svg>
<svg class="a" style="left:323px;top:159px;" width="19" height="19" viewBox="0 0 19 19"><rect width="19" height="19" fill="#a8b8c8"/><path d="M3 6L7 3H16V13L12 16H3Z" fill="#1a50c0"/><path d="M3 6H12V16H3Z" fill="#1040a0"/><path d="M3 6L7 3H16L12 6Z" fill="#3a80e0"/></svg>
<svg class="a" style="left:345px;top:159px;" width="19" height="19" viewBox="0 0 19 19"><rect width="19" height="19" fill="#b0b0b0"/><path d="M3 6L7 3H16V13L12 16H3Z" fill="#555" stroke="#111"/><path d="M3 6H12V16M12 6L16 3" stroke="#111" fill="none"/></svg>
<svg class="a" style="left:366px;top:159px;" width="19" height="19" viewBox="0 0 19 19"><rect width="19" height="19" fill="#b0b0b0"/><rect x="3" y="4" width="12" height="12" fill="#333"/><rect x="3" y="4" width="6" height="6" fill="#888"/><rect x="9" y="10" width="6" height="6" fill="#777"/></svg>
<svg class="a" style="left:386px;top:159px;" width="19" height="19" viewBox="0 0 19 19"><rect width="19" height="19" fill="#b8b8b8"/><circle cx="9.5" cy="7" r="5" fill="#f0e030" stroke="#8a7010" stroke-width="0.8"/><rect x="7.5" y="12" width="4" height="5" fill="#666"/></svg>
<svg class="a" style="left:408px;top:159px;" width="19" height="19" viewBox="0 0 19 19"><rect width="19" height="19" fill="#b0c0d0"/><path d="M3 6L7 3H16V13L12 16H3Z" fill="#a8d0f0" opacity="0.8"/></svg>
<svg class="a" style="left:429px;top:159px;" width="19" height="19" viewBox="0 0 19 19"><rect width="19" height="19" fill="#b8b8b8"/><path d="M3 6L7 3H16V13L12 16H3Z" fill="#c01010"/><path d="M3 6H12V16H3Z" fill="#a00808"/><path d="M3 6L7 3H16L12 6Z" fill="#e04040"/></svg>
<svg class="a" style="left:461px;top:159px;" width="19" height="19" viewBox="0 0 19 19"><rect width="19" height="19" fill="#b0b0b0"/><rect x="3" y="4" width="12" height="11" fill="none" stroke="#1a30c0" stroke-width="1.8"/><path d="M1 4H17M1 15H17M3 2V17M15 2V17" stroke="#1a30c0" stroke-width="0.8"/><path d="M12 12L18 15L15.5 16L17 18.5L16 19L14.5 16.5L13 18Z" fill="#b01010"/></svg>
<svg class="a" style="left:492px;top:159px;" width="19" height="19" viewBox="0 0 19 19"><rect width="19" height="19" fill="#111"/><path d="M3 6L7 3H16V13L12 16H3Z M3 6H12V16M12 6L16 3" fill="none" stroke="#ccc" stroke-width="1"/></svg>
<svg class="a" style="left:514px;top:159px;" width="19" height="19" viewBox="0 0 19 19"><rect width="19" height="19" fill="#111"/><rect x="3" y="3" width="13" height="13" fill="none" stroke="#ddd"/><path d="M1 6H18M1 13H18M6 1V18M13 1V18" stroke="#ddd" stroke-width="0.8"/></svg>
<svg class="a" style="left:535px;top:159px;" width="19" height="19" viewBox="0 0 19 19"><rect width="19" height="19" fill="#111"/><circle cx="6" cy="4" r="2" fill="none" stroke="#ccc" stroke-width="1.2"/><circle cx="6" cy="12" r="2" fill="none" stroke="#ccc" stroke-width="1.2"/><circle cx="14" cy="15" r="2" fill="none" stroke="#ccc" stroke-width="1.2"/><path d="M6 6V10M8 13L12 14M7 3L14 1" stroke="#ccc" stroke-width="1.5"/></svg>
<svg class="a" style="left:37px;top:179px" width="553" height="445"><rect width="553" height="445" fill="#a2a2a2"/><rect x="18" y="0" width="1" height="445" fill="#727272"/><rect x="36" y="0" width="1" height="445" fill="#727272"/><rect x="55" y="0" width="1" height="445" fill="#727272"/><rect x="73" y="0" width="1" height="445" fill="#727272"/><rect x="92" y="0" width="1" height="445" fill="#727272"/><rect x="110" y="0" width="1" height="445" fill="#727272"/><rect x="128" y="0" width="1" height="445" fill="#727272"/><rect x="147" y="0" width="1" height="445" fill="#727272"/><rect x="165" y="0" width="1" height="445" fill="#727272"/><rect x="184" y="0" width="1" height="445" fill="#727272"/><rect x="202" y="0" width="1" height="445" fill="#727272"/><rect x="221" y="0" width="1" height="445" fill="#727272"/><rect x="239" y="0" width="1" height="445" fill="#727272"/><rect x="258" y="0" width="1" height="445" fill="#727272"/><rect x="294" y="0" width="1" height="445" fill="#727272"/><rect x="313" y="0" width="1" height="445" fill="#727272"/><rect x="331" y="0" width="1" height="445" fill="#727272"/><rect x="350" y="0" width="1" height="445" fill="#727272"/><rect x="368" y="0" width="1" height="445" fill="#727272"/><rect x="387" y="0" width="1" height="445" fill="#727272"/><rect x="405" y="0" width="1" height="445" fill="#727272"/><rect x="424" y="0" width="1" height="445" fill="#727272"/><rect x="442" y="0" width="1" height="445" fill="#727272"/><rect x="461" y="0" width="1" height="445" fill="#727272"/><rect x="479" y="0" width="1" height="445" fill="#727272"/><rect x="497" y="0" width="1" height="445" fill="#727272"/><rect x="516" y="0" width="1" height="445" fill="#727272"/><rect x="534" y="0" width="1" height="445" fill="#727272"/><rect x="0" y="1" width="553" height="1" fill="#727272"/><rect x="0" y="20" width="553" height="1" fill="#727272"/><rect x="0" y="38" width="553" height="1" fill="#727272"/><rect x="0" y="56" width="553" height="1" fill="#727272"/><rect x="0" y="75" width="553" height="1" fill="#727272"/><rect x="0" y="93" width="553" height="1" fill="#727272"/><rect x="0" y="112" width="553" height="1" fill="#727272"/><rect x="0" y="130" width="553" height="1" fill="#727272"/><rect x="0" y="149" width="553" height="1" fill="#727272"/><rect x="0" y="167" width="553" height="1" fill="#727272"/><rect x="0" y="186" width="553" height="1" fill="#727272"/><rect x="0" y="204" width="553" height="1" fill="#727272"/><rect x="0" y="241" width="553" height="1" fill="#727272"/><rect x="0" y="259" width="553" height="1" fill="#727272"/><rect x="0" y="278" width="553" height="1" fill="#727272"/><rect x="0" y="296" width="553" height="1" fill="#727272"/><rect x="0" y="315" width="553" height="1" fill="#727272"/><rect x="0" y="333" width="553" height="1" fill="#727272"/><rect x="0" y="352" width="553" height="1" fill="#727272"/><rect x="0" y="370" width="553" height="1" fill="#727272"/><rect x="0" y="389" width="553" height="1" fill="#727272"/><rect x="0" y="407" width="553" height="1" fill="#727272"/><rect x="0" y="425" width="553" height="1" fill="#727272"/><rect x="0" y="444" width="553" height="1" fill="#727272"/><rect x="276" y="0" width="2" height="445" fill="#000"/><rect x="0.5" y="0.5" width="552" height="444" fill="none" stroke="#767676"/><rect x="0" y="222" width="553" height="2" fill="#000"/><defs><linearGradient id="gsh" x1="0" y1="0" x2="0" y2="1"><stop offset="0" stop-color="#555" stop-opacity="0.8"/><stop offset="1" stop-color="#888" stop-opacity="0"/></linearGradient></defs><filter id="blr" x="-50%" y="-50%" width="200%" height="200%"><feGaussianBlur stdDeviation="2.5"/></filter><rect x="471" y="75" width="60" height="8" fill="#505050" opacity="0.6" filter="url(#blr)"/><rect x="476" y="28" width="49" height="49" fill="#d8d8dc" opacity="0.72"/>
<polygon points="362.5,111.5 391.5,151.5 424.5,277.5 252.5,246.5 189.5,170.5" fill="none" stroke="#f0f060" stroke-width="1.5"/>
<rect x="359" y="108" width="7" height="7" fill="#f8f820"/>
<rect x="388" y="148" width="7" height="7" fill="#f8f820"/>
<rect x="421" y="274" width="7" height="7" fill="#f8f820"/>
<rect x="249" y="243" width="7" height="7" fill="#f8f820"/>
<rect x="186" y="167" width="7" height="7" fill="#f8f820"/>
</svg>
<div class="t" style="left:519px;top:225px;font-weight:bold;font-size:16px;color:#6c6c74;transform:scaleX(0.7);transform-origin:0 0;-webkit-text-stroke:0.6px #6c6c74">FRONT</div>
<div class="t" style="left:58px;top:571px;font-weight:bold;font-size:12px;color:#30e030;-webkit-text-stroke:0.4px #30e030">Y</div>
<div class="t" style="left:58px;top:587px;font-weight:bold;font-size:12px;color:#0010b0;-webkit-text-stroke:0.4px #0010b0">Z</div>
<div class="t" style="left:75px;top:587px;font-weight:bold;font-size:12px;color:#e02020;-webkit-text-stroke:0.4px #e02020">X</div>
<div class="a" style="left:62px;top:599px;width:14px;height:1px;background:#b02020"></div>
<div class="t" style="left:294px;top:605px;font-weight:bold;font-size:11.5px;color:#0a3a1a;-webkit-text-stroke:0.3px #0a3a1a">front</div>
<div class="a" style="left:593px;top:131px;width:171px;height:497px;background:#f0f0f0"></div>
<svg class="a" style="left:595px;top:137px;" width="4" height="6" viewBox="0 0 4 6"><path d="M0 0L3.5 2.5L0 5Z" fill="#223"/></svg>
<div class="a" style="left:601px;top:138px;width:163px;height:1px;background:repeating-linear-gradient(90deg,#444 0 1px,transparent 1px 3px)"></div>
<div class="a" style="left:602px;top:141px;width:162px;height:1px;background:repeating-linear-gradient(90deg,#444 0 1px,transparent 1px 3px)"></div>
<div class="t" style="left:597px;top:151px;">List</div>
<div class="t" style="left:623px;top:151px;">Selected</div>
<div class="t" style="left:674px;top:151px;">Focus</div>
<div class="t" style="left:712px;top:151px;">Attributes</div>
<div class="a" style="left:594px;top:165px;width:170px;height:1px;background:#c8c8c8"></div>
<div class="a" style="left:594px;top:167px;width:170px;height:1px;background:#a0a0a0"></div>
<div class="a" style="left:594px;top:167px;width:1px;height:461px;background:#a0a0a0"></div>
<div class="a" style="left:595px;top:168px;width:169px;height:460px;background:#f0f0f0"></div>
<div class="a" style="left:595px;top:168px;width:2px;height:367px;background:#fafafa"></div>
<div class="a" style="left:597px;top:179px;width:167px;height:1px;background:#fafafa"></div>
<div class="a" style="left:597px;top:179px;width:1px;height:29px;background:#fafafa"></div>
<div class="t" style="left:603px;top:182px;letter-spacing:-0.3px">polySurfaceShape1</div>
<div class="a" style="left:702px;top:181px;width:1px;height:27px;background:#a0a0a0"></div>
<div class="a" style="left:703px;top:181px;width:1px;height:27px;background:#fff"></div>
<div class="t" style="left:708px;top:184px;letter-spacing:-0.3px">initialShadingGroup</div>
<div class="a" style="left:595px;top:208px;width:169px;height:1px;background:#a0a0a0"></div>
<div class="a" style="left:595px;top:209px;width:169px;height:1px;background:#fff"></div>
<div class="t" style="left:710px;top:240px;">mesh:</div>
<div class="a" style="left:746px;top:236px;width:18px;height:21px;background:#fff;border-left:1px solid #a0a0a0;border-top:1px solid #a0a0a0;box-sizing:border-box"></div>
<div class="t" style="left:749px;top:240px;">polySurfaceShape1</div>
<div class="a" style="left:597px;top:289px;width:167px;height:1px;background:#a8a8a8"></div>
<div class="a" style="left:597px;top:290px;width:167px;height:1px;background:#fff"></div>
<div class="a" style="left:598px;top:293px;width:166px;height:18px;background:#ececec;border-top:1px solid #a8a8a8;border-left:1px solid #a8a8a8;box-sizing:border-box"></div>
<div class="a" style="left:598px;top:311px;width:166px;height:1px;background:#a8a8a8"></div>
<div class="a" style="left:599px;top:294px;width:16px;height:15px;background:#f0f0f0;border-right:1px solid #a0a0a0;border-bottom:1px solid #a0a0a0;box-sizing:border-box"></div>
<svg class="a" style="left:606px;top:298px;" width="5" height="8" viewBox="0 0 5 8"><path d="M0 0L4.5 3.75L0 7.5Z" fill="#000"/></svg>
<div class="t" style="left:624px;top:295px;font-weight:bold;font-size:11.7px">Tessellation Attributes</div>
<div class="a" style="left:598px;top:313px;width:166px;height:18px;background:#ececec;border-top:1px solid #a8a8a8;border-left:1px solid #a8a8a8;box-sizing:border-box"></div>
<div class="a" style="left:598px;top:331px;width:166px;height:1px;background:#a8a8a8"></div>
<div class="a" style="left:599px;top:314px;width:16px;height:15px;background:#f0f0f0;border-right:1px solid #a0a0a0;border-bottom:1px solid #a0a0a0;box-sizing:border-box"></div>
<svg class="a" style="left:606px;top:318px;" width="5" height="8" viewBox="0 0 5 8"><path d="M0 0L4.5 3.75L0 7.5Z" fill="#000"/></svg>
<div class="t" style="left:624px;top:315px;font-weight:bold;font-size:11.7px">Mesh Component Display</div>
<div class="a" style="left:598px;top:333px;width:166px;height:18px;background:#ececec;border-top:1px solid #a8a8a8;border-left:1px solid #a8a8a8;box-sizing:border-box"></div>
<div class="a" style="left:598px;top:351px;width:166px;height:1px;background:#a8a8a8"></div>
<div class="a" style="left:599px;top:334px;width:16px;height:15px;background:#f0f0f0;border-right:1px solid #a0a0a0;border-bottom:1px solid #a0a0a0;box-sizing:border-box"></div>
<svg class="a" style="left:606px;top:338px;" width="5" height="8" viewBox="0 0 5 8"><path d="M0 0L4.5 3.75L0 7.5Z" fill="#000"/></svg>
<div class="t" style="left:624px;top:335px;font-weight:bold;font-size:11.7px">Mesh Controls</div>
<div class="a" style="left:598px;top:353px;width:166px;height:18px;background:#ececec;border-top:1px solid #a8a8a8;border-left:1px solid #a8a8a8;box-sizing:border-box"></div>
<div class="a" style="left:598px;top:371px;width:166px;height:1px;background:#a8a8a8"></div>
<div class="a" style="left:599px;top:354px;width:16px;height:15px;background:#f0f0f0;border-right:1px solid #a0a0a0;border-bottom:1px solid #a0a0a0;box-sizing:border-box"></div>
<svg class="a" style="left:606px;top:358px;" width="5" height="8" viewBox="0 0 5 8"><path d="M0 0L4.5 3.75L0 7.5Z" fill="#000"/></svg>
<div class="t" style="left:624px;top:355px;font-weight:bold;font-size:11.7px">Tangent Space</div>
<div class="a" style="left:598px;top:373px;width:166px;height:18px;background:#ececec;border-top:1px solid #a8a8a8;border-left:1px solid #a8a8a8;box-sizing:border-box"></div>
<div class="a" style="left:598px;top:391px;width:166px;height:1px;background:#a8a8a8"></div>
<div class="a" style="left:599px;top:374px;width:16px;height:15px;background:#f0f0f0;border-right:1px solid #a0a0a0;border-bottom:1px solid #a0a0a0;box-sizing:border-box"></div>
<svg class="a" style="left:606px;top:378px;" width="5" height="8" viewBox="0 0 5 8"><path d="M0 0L4.5 3.75L0 7.5Z" fill="#000"/></svg>
<div class="t" style="left:624px;top:375px;font-weight:bold;font-size:11.7px">Smooth Mesh</div>
<div class="a" style="left:598px;top:393px;width:166px;height:18px;background:#ececec;border-top:1px solid #a8a8a8;border-left:1px solid #a8a8a8;box-sizing:border-box"></div>
<div class="a" style="left:598px;top:411px;width:166px;height:1px;background:#a8a8a8"></div>
<div class="a" style="left:599px;top:394px;width:16px;height:15px;background:#f0f0f0;border-right:1px solid #a0a0a0;border-bottom:1px solid #a0a0a0;box-sizing:border-box"></div>
<svg class="a" style="left:606px;top:398px;" width="5" height="8" viewBox="0 0 5 8"><path d="M0 0L4.5 3.75L0 7.5Z" fill="#000"/></svg>
<div class="t" style="left:624px;top:395px;font-weight:bold;font-size:11.7px">Displacement Map</div>
<div class="a" style="left:598px;top:413px;width:166px;height:18px;background:#ececec;border-top:1px solid #a8a8a8;border-left:1px solid #a8a8a8;box-sizing:border-box"></div>
<div class="a" style="left:598px;top:431px;width:166px;height:1px;background:#a8a8a8"></div>
<div class="a" style="left:599px;top:414px;width:16px;height:15px;background:#f0f0f0;border-right:1px solid #a0a0a0;border-bottom:1px solid #a0a0a0;box-sizing:border-box"></div>
<svg class="a" style="left:606px;top:418px;" width="5" height="8" viewBox="0 0 5 8"><path d="M0 0L4.5 3.75L0 7.5Z" fill="#000"/></svg>
<div class="t" style="left:624px;top:415px;font-weight:bold;font-size:11.7px">Render Stats</div>
<div class="a" style="left:598px;top:433px;width:166px;height:18px;background:#ececec;border-top:1px solid #a8a8a8;border-left:1px solid #a8a8a8;box-sizing:border-box"></div>
<div class="a" style="left:598px;top:451px;width:166px;height:1px;background:#a8a8a8"></div>
<div class="a" style="left:599px;top:434px;width:16px;height:15px;background:#f0f0f0;border-right:1px solid #a0a0a0;border-bottom:1px solid #a0a0a0;box-sizing:border-box"></div>
<svg class="a" style="left:606px;top:438px;" width="5" height="8" viewBox="0 0 5 8"><path d="M0 0L4.5 3.75L0 7.5Z" fill="#000"/></svg>
<div class="t" style="left:624px;top:435px;font-weight:bold;font-size:11.7px">mental ray</div>
<div class="a" style="left:598px;top:453px;width:166px;height:18px;background:#ececec;border-top:1px solid #a8a8a8;border-left:1px solid #a8a8a8;box-sizing:border-box"></div>
<div class="a" style="left:598px;top:471px;width:166px;height:1px;background:#a8a8a8"></div>
<div class="a" style="left:599px;top:454px;width:16px;height:15px;background:#f0f0f0;border-right:1px solid #a0a0a0;border-bottom:1px solid #a0a0a0;box-sizing:border-box"></div>
<svg class="a" style="left:606px;top:458px;" width="5" height="8" viewBox="0 0 5 8"><path d="M0 0L4.5 3.75L0 7.5Z" fill="#000"/></svg>
<div class="t" style="left:624px;top:455px;font-weight:bold;font-size:11.7px">Object Display</div>
<div class="a" style="left:598px;top:473px;width:166px;height:18px;background:#ececec;border-top:1px solid #a8a8a8;border-left:1px solid #a8a8a8;box-sizing:border-box"></div>
<div class="a" style="left:598px;top:491px;width:166px;height:1px;background:#a8a8a8"></div>
<div class="a" style="left:599px;top:474px;width:16px;height:15px;background:#f0f0f0;border-right:1px solid #a0a0a0;border-bottom:1px solid #a0a0a0;box-sizing:border-box"></div>
<svg class="a" style="left:606px;top:478px;" width="5" height="8" viewBox="0 0 5 8"><path d="M0 0L4.5 3.75L0 7.5Z" fill="#000"/></svg>
<div class="t" style="left:624px;top:475px;font-weight:bold;font-size:11.7px">Node Behavior</div>
<div class="a" style="left:598px;top:493px;width:166px;height:18px;background:#ececec;border-top:1px solid #a8a8a8;border-left:1px solid #a8a8a8;box-sizing:border-box"></div>
<div class="a" style="left:598px;top:511px;width:166px;height:1px;background:#a8a8a8"></div>
<div class="a" style="left:599px;top:494px;width:16px;height:15px;background:#f0f0f0;border-right:1px solid #a0a0a0;border-bottom:1px solid #a0a0a0;box-sizing:border-box"></div>
<svg class="a" style="left:606px;top:498px;" width="5" height="8" viewBox="0 0 5 8"><path d="M0 0L4.5 3.75L0 7.5Z" fill="#000"/></svg>
<div class="t" style="left:624px;top:495px;font-weight:bold;font-size:11.7px">Extra Attributes</div>
<div class="a" style="left:595px;top:535px;width:169px;height:1px;background:#a8a8a8"></div>
<div class="a" style="left:595px;top:536px;width:169px;height:6px;background:#f8f8f8"></div>
<div class="a" style="left:595px;top:542px;width:169px;height:18px;background:#ececec;border-top:1px solid #a8a8a8;box-sizing:border-box"></div>
<div class="t" style="left:607px;top:544px;font-weight:bold;font-size:11.7px">Notes:</div>
<div class="t" style="left:652px;top:544px;font-weight:bold;font-size:11.7px;letter-spacing:0.05px">polySurfaceShape1</div>
<div class="a" style="left:595px;top:559px;width:169px;height:1px;background:#a8a8a8"></div>
<div class="a" style="left:595px;top:560px;width:169px;height:37px;background:#fff"></div>
<div class="a" style="left:595px;top:596px;width:169px;height:1px;background:#d0d0d0"></div>
<div class="a" style="left:595px;top:601px;width:137px;height:25px;background:#f0f0f0;border-top:1px solid #fff;border-left:1px solid #fff;border-right:2px solid #505050;border-bottom:2px solid #505050;box-sizing:border-box"></div>
<div class="t" style="left:648px;top:607px;font-size:11.5px">Select</div>
<div class="a" style="left:735px;top:601px;width:29px;height:25px;background:#f0f0f0;border-top:1px solid #fff;border-left:1px solid #fff;border-bottom:2px solid #505050;box-sizing:border-box"></div>
<div class="a" style="left:0px;top:628px;width:764px;height:104px;background:#f0f0f0"></div>
<div class="a" style="left:7px;top:629px;width:713px;height:31px;background:#ececec;border-top:1px solid #c8c8c8;box-sizing:border-box"></div>
<div class="a" style="left:11px;top:631px;width:29px;height:28px;background:#111"></div>
<div class="t" style="left:17px;top:643px;font-weight:bold;font-size:12.5px;color:#fff">1</div>
<div class="a" style="left:40px;top:647px;width:2px;height:11px;background:#111"></div>
<div class="t" style="left:45px;top:632px;font-weight:bold;font-size:12.5px;color:#111">2</div>
<div class="a" style="left:99px;top:647px;width:2px;height:11px;background:#111"></div>
<div class="t" style="left:104px;top:632px;font-weight:bold;font-size:12.5px;color:#111">4</div>
<div class="a" style="left:157px;top:647px;width:2px;height:11px;background:#111"></div>
<div class="t" style="left:162px;top:632px;font-weight:bold;font-size:12.5px;color:#111">6</div>
<div class="a" style="left:216px;top:647px;width:2px;height:11px;background:#111"></div>
<div class="t" style="left:221px;top:632px;font-weight:bold;font-size:12.5px;color:#111">8</div>
<div class="a" style="left:275px;top:647px;width:2px;height:11px;background:#111"></div>
<div class="t" style="left:282px;top:632px;font-weight:bold;font-size:12.5px;color:#111">10</div>
<div class="a" style="left:334px;top:647px;width:2px;height:11px;background:#111"></div>
<div class="t" style="left:341px;top:632px;font-weight:bold;font-size:12.5px;color:#111">12</div>
<div class="a" style="left:392px;top:647px;width:2px;height:11px;background:#111"></div>
<div class="t" style="left:399px;top:632px;font-weight:bold;font-size:12.5px;color:#111">14</div>
<div class="a" style="left:451px;top:647px;width:2px;height:11px;background:#111"></div>
<div class="t" style="left:458px;top:632px;font-weight:bold;font-size:12.5px;color:#111">16</div>
<div class="a" style="left:510px;top:647px;width:2px;height:11px;background:#111"></div>
<div class="t" style="left:517px;top:632px;font-weight:bold;font-size:12.5px;color:#111">18</div>
<div class="a" style="left:569px;top:647px;width:2px;height:11px;background:#111"></div>
<div class="t" style="left:576px;top:632px;font-weight:bold;font-size:12.5px;color:#111">20</div>
<div class="a" style="left:627px;top:647px;width:2px;height:11px;background:#111"></div>
<div class="t" style="left:634px;top:632px;font-weight:bold;font-size:12.5px;color:#111">22</div>
<div class="a" style="left:686px;top:647px;width:2px;height:11px;background:#111"></div>
<div class="t" style="left:693px;top:632px;font-weight:bold;font-size:12.5px;color:#111">24</div>
<div class="a" style="left:39px;top:647px;width:1px;height:11px;background:#fff"></div>
<div class="a" style="left:725px;top:635px;width:39px;height:19px;background:#fff;border-left:1px solid #a0a0a0;border-top:1px solid #a0a0a0;box-sizing:border-box"></div>
<div class="t" style="left:729px;top:638px;">1.00</div>
<svg class="a" style="left:0px;top:631px;" width="4" height="4" viewBox="0 0 4 4"><path d="M0 0H3.5L0 3.5Z" fill="#333"/></svg>
<svg class="a" style="left:0px;top:663px;" width="4" height="4" viewBox="0 0 4 4"><path d="M0 0H3.5L0 3.5Z" fill="#333"/></svg>
<svg class="a" style="left:0px;top:689px;" width="4" height="4" viewBox="0 0 4 4"><path d="M0 0H3.5L0 3.5Z" fill="#333"/></svg>
<svg class="a" style="left:0px;top:714px;" width="4" height="4" viewBox="0 0 4 4"><path d="M0 0H3.5L0 3.5Z" fill="#333"/></svg>
<div class="a" style="left:2px;top:638px;width:1px;height:94px;background:repeating-linear-gradient(#555 0 1px,transparent 1px 3px)"></div>
<div class="a" style="left:7px;top:662px;width:66px;height:23px;background:#fff;border-left:1px solid #b0b0b0;border-top:1px solid #b0b0b0;border-right:1px solid #e8e8e8;border-bottom:1px solid #e8e8e8;box-sizing:border-box"></div>
<div class="t" style="left:10px;top:666px;">1.00</div>
<div class="a" style="left:76px;top:662px;width:67px;height:23px;background:#fff;border-left:1px solid #b0b0b0;border-top:1px solid #b0b0b0;border-right:1px solid #e8e8e8;border-bottom:1px solid #e8e8e8;box-sizing:border-box"></div>
<div class="t" style="left:79px;top:666px;">1.00</div>
<div class="a" style="left:145px;top:662px;width:428px;height:23px;background:#b4b4b4"></div>
<div class="a" style="left:149px;top:665px;width:220px;height:18px;background:#ececec;border-top:1px solid #fafafa;border-left:1px solid #fafafa;box-sizing:border-box"></div>
<div class="a" style="left:155px;top:667px;width:9px;height:13px;background:#f0f0f0;border-right:1px solid #aaa;border-bottom:1px solid #aaa;border-left:1px solid #fff;border-top:1px solid #fff;box-sizing:border-box"></div>
<div class="a" style="left:356px;top:667px;width:9px;height:13px;background:#f0f0f0;border-right:1px solid #aaa;border-bottom:1px solid #aaa;border-left:1px solid #fff;border-top:1px solid #fff;box-sizing:border-box"></div>
<div class="t" style="left:167px;top:668px;color:#d8d8d8">1</div>
<div class="t" style="left:339px;top:668px;color:#d8d8d8">24</div>
<div class="a" style="left:576px;top:662px;width:67px;height:23px;background:#fff;border-left:1px solid #b0b0b0;border-top:1px solid #b0b0b0;border-right:1px solid #e8e8e8;border-bottom:1px solid #e8e8e8;box-sizing:border-box"></div>
<div class="t" style="left:579px;top:666px;">24.00</div>
<div class="a" style="left:646px;top:662px;width:67px;height:23px;background:#fff;border-left:1px solid #b0b0b0;border-top:1px solid #b0b0b0;border-right:1px solid #e8e8e8;border-bottom:1px solid #e8e8e8;box-sizing:border-box"></div>
<div class="t" style="left:649px;top:666px;">48.00</div>
<div class="a" style="left:715px;top:662px;width:23px;height:24px;background:#ececec;border-right:1px solid #a0a0a0;border-bottom:1px solid #a0a0a0;box-sizing:border-box"></div>
<svg class="a" style="left:718px;top:669px;" width="17" height="9" viewBox="0 0 17 9"><path d="M0 0H17L8.5 8.5Z" fill="#222"/></svg>
<div class="a" style="left:741px;top:662px;width:23px;height:23px;background:#fff;border-left:1px solid #b0b0b0;border-top:1px solid #b0b0b0;border-right:1px solid #e8e8e8;border-bottom:1px solid #e8e8e8;box-sizing:border-box"></div>
<div class="t" style="left:744px;top:666px;">No Anim</div>
<div class="a" style="left:0px;top:687px;width:764px;height:1px;background:#c8c8c8"></div>
<div class="t" style="left:18px;top:693px;font-weight:bold;font-size:12px;letter-spacing:0.5px">MEL</div>
<div class="a" style="left:56px;top:688px;width:474px;height:23px;background:#fff;border-left:1px solid #b0b0b0;border-top:1px solid #b0b0b0;border-right:1px solid #e0e0e0;box-sizing:border-box"></div>
<div class="a" style="left:536px;top:689px;width:228px;height:19px;background:#9098a4"></div>
<div class="t" style="left:538px;top:692px;color:#111;letter-spacing:-0.05px">// Result: polyExtrudeEdge -constructionHistory 1</div>
<div class="a" style="left:7px;top:712px;width:757px;height:20px;background:#ececec;border-top:1px solid #a8a8a8;border-left:1px solid #a8a8a8;box-sizing:border-box"></div>
<div class="t" style="left:21px;top:717px;letter-spacing:-0.1px">Show Manipulator Tool: Select an object.</div>
<svg class="a" style="left:34px;top:727px;" width="18" height="5" viewBox="0 0 18 5"><circle cx="8.5" cy="10" r="8" fill="none" stroke="#444" stroke-width="1.6"/></svg></body></html>
